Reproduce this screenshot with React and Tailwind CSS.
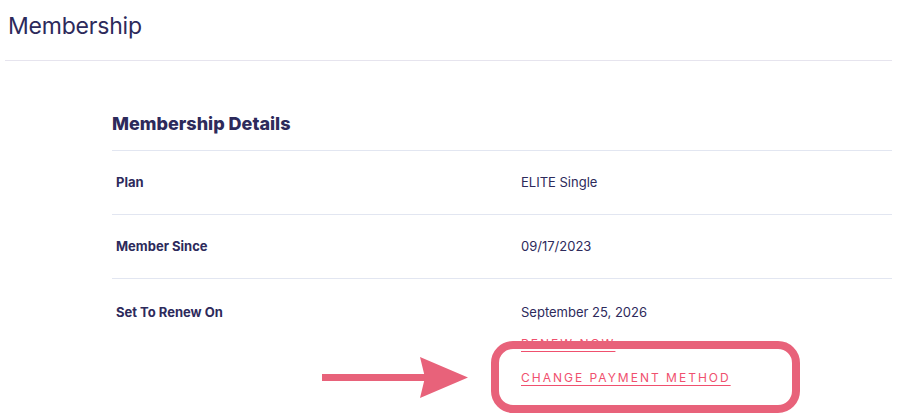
export default function App() {
  const rows = [
    { label: "Plan", value: "ELITE Single" },
    { label: "Member Since", value: "09/17/2023" },
  ];
  return (
    <div className="relative w-[903px] h-[413px] overflow-hidden bg-white font-['Inter',sans-serif] text-[#2d2a5b]">
      <div className="px-[5px]">
        <h1 className="w-[887px] border-b border-[#e6e4ee] pl-[3px] pt-[8px] pb-[16px] text-[23px] leading-[36px] font-normal tracking-[-0.2px]">
          Membership
        </h1>
      </div>
      <div className="ml-[112px] w-[780px] pt-[51px]">
        <h2 className="text-[18px] leading-[24px] font-extrabold pb-[14px]">Membership Details</h2>
        <div className="border-t border-[#e2e6f1]">
          {rows.map((r) => (
            <div key={r.label} className="flex items-center h-[64px] border-b border-[#e2e6f1]">
              <div className="w-[409px] pl-[4px] text-[13px] font-bold">{r.label}</div>
              <div className="text-[13px]">{r.value}</div>
            </div>
          ))}
          <div className="flex pt-[23px]">
            <div className="w-[409px] pl-[4px] text-[13px] font-bold leading-[20px]">Set To Renew On</div>
            <div className="flex flex-col items-start">
              <div className="text-[13px] leading-[20px]">September 25, 2026</div>
              <a className="mt-[14px] text-[12px] leading-[16px] tracking-[2px] text-[#f0506e] underline underline-offset-[3px]">RENEW NOW</a>
              <a className="mt-[18px] text-[12px] leading-[16px] tracking-[2px] text-[#f0506e] underline underline-offset-[3px]">CHANGE PAYMENT METHOD</a>
            </div>
          </div>
        </div>
      </div>
      <div className="absolute left-[491px] top-[341px] w-[309px] h-[72px] rounded-[22px] border-[8px] border-[#e8627a]"></div>
      <svg className="absolute left-[320px] top-[354px]" width="150" height="46" viewBox="0 0 150 46">
        <rect x="2" y="20" width="104" height="7" fill="#e8627a" />
        <polygon points="100,3 148,23.5 100,44 105,23.5" fill="#e8627a" />
      </svg>
    </div>
  );
}
